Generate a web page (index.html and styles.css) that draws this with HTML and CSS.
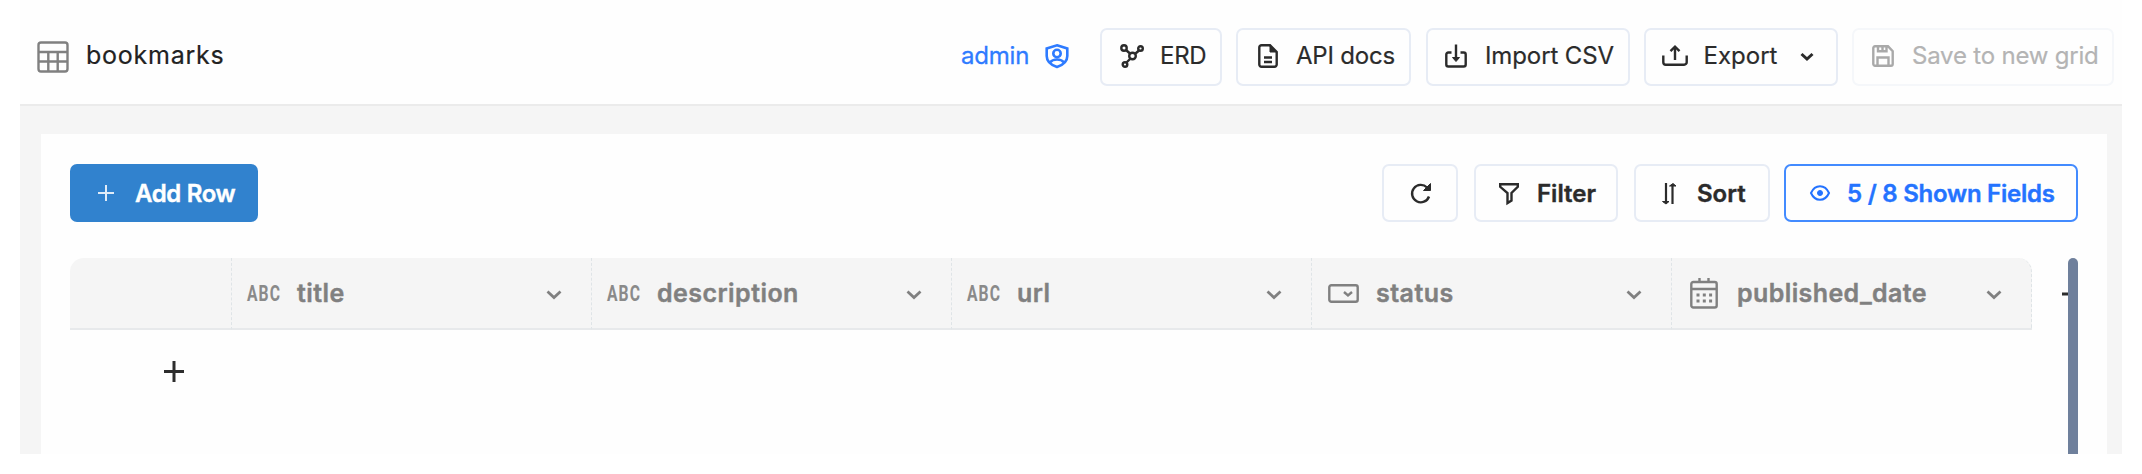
FILE: index.html
```
<!DOCTYPE html>
<html lang="en">
<head>
<meta charset="utf-8">
<title>bookmarks</title>
<link rel="stylesheet" href="styles.css">
</head>
<body>
<div class="app">
  <header class="topbar">
    <svg class="icon table-icon" width="32" height="32" viewBox="0 0 32 32"><rect x="1.5" y="1.500" width="29" height="29" rx="2.5"/><path d="M2 11h28M2 20.500h28M11.300 11v19.500M20.700 11v19.500"/></svg>
    <h1 class="page-title">bookmarks</h1>
    <span class="role">admin</span>
    <svg class="icon shield" width="24" height="24" viewBox="0 0 24 24"><path d="M12 1.300 22.300 4.500V12c0 5.500-4.300 9-10.300 11C6 21 1.700 17.500 1.700 12V4.500z"/><circle cx="12" cy="9.500" r="3.700"/><path d="M5 18.500c3-4 11-4 14 0"/></svg>
    <nav class="actions">
      <button class="btn erd"><svg class="icon" width="24" height="24" viewBox="0 0 24 24"><circle cx="4" cy="4" r="2.700"/><circle cx="20.500" cy="4.500" r="2.300"/><circle cx="5" cy="20.500" r="2.300"/><circle cx="12.500" cy="12" r="3.300"/><path d="m6 6 4 3.500M15.500 9.500l3.500-3M10 15l-3.500 3.500"/></svg><span>ERD</span></button>
      <button class="btn docs"><svg class="icon" width="20" height="24" viewBox="0 0 20 24"><path d="M3.500 1.300H12l6.700 6.700v12.500a2.200 2.200 0 0 1-2.200 2.200h-13a2.200 2.200 0 0 1-2.200-2.200v-17a2.200 2.200 0 0 1 2.200-2.200z"/><path class="solid" d="M12 1.500V8h6.500z"/><path d="M6 13.500h8M6 18h8"/></svg><span>API docs</span></button>
      <button class="btn import"><svg class="icon" width="22" height="24" viewBox="0 0 22 24"><path d="M6.500 8.500H3.300a2 2 0 0 0-2 2v10a2 2 0 0 0 2 2h15.400a2 2 0 0 0 2-2v-10a2 2 0 0 0-2-2h-3.200M11 .5v15"/><path class="solid" d="m7.500 13.500 3.500 4 3.500-4z"/></svg><span>Import CSV</span></button>
      <button class="btn export"><svg class="icon" width="26" height="20" viewBox="0 0 26 20"><path d="M1.300 9.500v6.700a2.500 2.500 0 0 0 2.500 2.500h18.400a2.500 2.500 0 0 0 2.500-2.500V9.500M13 14V2"/><path d="m8.500 5.200 4.500-4.500 4.500 4.500"/></svg><span>Export</span><svg class="icon caret" width="14" height="10" viewBox="0 0 14 10"><path d="m1.500 3 5.500 5 5.500-5"/></svg></button>
      <button class="btn save" disabled><svg class="icon" width="22" height="22" viewBox="0 0 22 22"><path d="M3 1.300h13l4.700 5V19a1.700 1.700 0 0 1-1.700 1.700H3A1.700 1.700 0 0 1 1.300 19V3A1.700 1.700 0 0 1 3 1.300zM6 1.500v4.800h8.500V1.500M5.500 20.500v-8h11v8M10.500 2v3"/></svg><span>Save to new grid</span></button>
    </nav>
  </header>
  <main class="card">
    <div class="toolbar">
      <button class="btn add"><svg class="icon" width="16" height="16" viewBox="0 0 16 16"><path d="M0 8h16M8 0v16"/></svg><span>Add Row</span></button>
      <div class="tools">
        <button class="btn refresh"><svg class="icon" width="21" height="21" viewBox="0 0 21 21"><path d="M19 13.500A8.700 8.700 0 1 1 17 4.500"/><path class="solid" d="M20.500 .5v7h-7z"/></svg></button>
        <button class="btn filter"><svg class="icon" width="20" height="21" viewBox="0 0 20 21"><path d="M1.200 1.300h17.600v2.500L12.500 10v7.500l-4 2.500V10L1.200 3.800z"/></svg><span>Filter</span></button>
        <button class="btn sort"><svg class="icon" width="14" height="21" viewBox="0 0 14 21"><path d="M4 0v18M10.500 21V3"/><path class="solid" d="M.5 18.500h6.500L4 21zM7.500 3h6.500L11 .5z"/></svg><span>Sort</span></button>
        <button class="btn fields"><svg class="icon" width="20" height="16" viewBox="0 0 20 16"><path d="M1 8c4-9 14-9 18 0-4 9-14 9-18 0z"/><circle class="solid" cx="10" cy="8" r="2.500"/></svg><span>5 / 8 Shown Fields</span></button>
      </div>
    </div>
    <div class="grid">
      <div class="columns">
        <div class="col index"></div>
        <div class="col title"><svg class="abc" width="34" height="28" viewBox="0 0 34 28"><text x="0" y="22" textLength="34" lengthAdjust="spacingAndGlyphs">ABC</text></svg><span>title</span><svg class="icon caret" width="16" height="11" viewBox="0 0 16 11"><path d="m1.500 2.500 6.500 6 6.500-6"/></svg></div>
        <div class="col description"><svg class="abc" width="34" height="28" viewBox="0 0 34 28"><text x="0" y="22" textLength="34" lengthAdjust="spacingAndGlyphs">ABC</text></svg><span>description</span><svg class="icon caret" width="16" height="11" viewBox="0 0 16 11"><path d="m1.500 2.500 6.500 6 6.500-6"/></svg></div>
        <div class="col url"><svg class="abc" width="34" height="28" viewBox="0 0 34 28"><text x="0" y="22" textLength="34" lengthAdjust="spacingAndGlyphs">ABC</text></svg><span>url</span><svg class="icon caret" width="16" height="11" viewBox="0 0 16 11"><path d="m1.500 2.500 6.500 6 6.500-6"/></svg></div>
        <div class="col status"><svg class="icon" width="31" height="19" viewBox="0 0 31 19"><rect x="1.300" y="1.300" width="28.400" height="16.400" rx="2"/><path d="m16 8 4 3.500 4-3.500"/></svg><span>status</span><svg class="icon caret" width="16" height="11" viewBox="0 0 16 11"><path d="m1.500 2.500 6.500 6 6.500-6"/></svg></div>
        <div class="col date"><svg class="icon" width="28" height="31" viewBox="0 0 28 31"><rect x="1.300" y="4" width="25.400" height="25.500" rx="2"/><path d="M1.500 11h25M9.500 0v4M18.500 0v4"/><path class="dots" d="M6.500 17h16M6.500 23h16"/></svg><span>published_date</span><svg class="icon caret" width="16" height="11" viewBox="0 0 16 11"><path d="m1.500 2.500 6.500 6 6.500-6"/></svg></div>
        <svg class="icon add-column" width="6" height="20" viewBox="0 0 6 20"><path d="M0 10h6"/></svg>
        <div class="scrollbar"></div>
      </div>
      <div class="new-row"><svg class="icon" width="20" height="21" viewBox="0 0 20 21"><path d="M0 10.500h20M10 0v21"/></svg></div>
    </div>
  </main>
</div>
</body>
</html>
```
FILE: styles.css
```
* { box-sizing: border-box; }
body { margin: 0; background: #fff; font: 400 24px/30px Inter, "Liberation Sans", sans-serif; color: #2d2d2d; }
.app { width: 2102px; height: 454px; margin-left: 20px; background: #f5f5f5; overflow: hidden; }
.icon { display: block; flex: none; fill: none; stroke: currentColor; stroke-width: 2.4; overflow: visible; }
.solid { fill: currentColor; stroke-width: 1; }
.topbar { height: 106px; padding: 9px 8px 0 17px; display: flex; align-items: center; background: #fefefe; border-bottom: 2px solid #ebebeb; }
.table-icon { color: #808080; }
.page-title { margin: -3px auto 0 17px; font-size: 25px; font-weight: 400; letter-spacing: .75px; color: #222; -webkit-text-stroke: .2px; }
.role, .shield { color: #2e7bff; }
.role { width: 67px; margin-top: -2px; white-space: nowrap; letter-spacing: -.2px; -webkit-text-stroke: .3px; }
.shield { margin: -1px 31px 0 17px; stroke-width: 2.6; }
.actions, .tools { display: flex; }
.actions { gap: 14px; }
.btn { height: 58px; display: flex; align-items: center; flex: none; padding: 0; border: 2px solid #e7ecf5; border-radius: 7px; background: #fefefe; color: #2b2b2b; font: inherit; white-space: nowrap; }
.actions .btn { padding-bottom: 2px; -webkit-text-stroke: .2px; }
.erd { width: 122px; padding-left: 18px; }
.erd span { margin-left: 16px; letter-spacing: -.3px; }
.docs { width: 175px; padding-left: 20px; }
.docs span { margin-left: 18px; letter-spacing: -.2px; }
.import { width: 204px; padding-left: 17px; margin-left: 1px; }
.import span { margin-left: 18px; letter-spacing: -.1px; }
.export { width: 194px; padding-left: 16px; }
.export span { width: 75px; margin-left: 15px; }
.export .caret { margin-left: 22px; stroke-width: 3; }
.save { width: 262px; padding-left: 18px; color: #a9a9a9; border-color: #f5f7fa; }
.actions .save { color: #a9a9a9; }
.save span { margin-left: 18px; color: #b4b4b4; letter-spacing: -.2px; }
.card { width: 2066px; height: 320px; margin: 28px 0 0 21px; padding: 30px 29px 0; background: #fefefe; }
.toolbar { height: 58px; display: flex; justify-content: space-between; font-weight: 600; }
.toolbar span { padding-top: 1px; -webkit-text-stroke: .4px; }
.tools { gap: 15px; }
.add { width: 188px; padding-left: 28px; border: 0; background: #3182ce; color: #fff; }
.add .icon { stroke-width: 2; opacity: .85; }
.add span { margin-left: 21px; letter-spacing: -.35px; }
.refresh { width: 76px; padding-left: 26px; }
.filter { width: 144px; padding-left: 23px; margin-left: 1px; }
.filter span { margin-left: 18px; }
.sort { width: 136px; padding-left: 26px; margin-left: 1px; }
.sort .icon { stroke-width: 2.2; }
.sort span { margin-left: 21px; }
.fields { width: 294px; padding-left: 24px; margin-left: -1px; border-color: #438bff; color: #2473ff; }
.fields .icon { stroke-width: 2; }
.fields span { margin-left: 17px; letter-spacing: -.25px; }
.grid { margin-top: 36px; }
.columns { display: flex; height: 196px; }
.col { width: 360px; height: 72px; flex: none; display: flex; align-items: center; padding: 0 29px 0 15px; background: #f5f5f5; color: #808080; border-bottom: 2px solid #e7e9eb; border-left: 1px dashed #dfe4e7; font-size: 25px; font-weight: 600; letter-spacing: .45px; }
.col .caret { margin: 2px 0 0 auto; stroke-width: 2.8; }
.col span { margin-left: 16px; white-space: nowrap; -webkit-text-stroke: .4px; }
.index { width: 161px; border-left: 0; border-top-left-radius: 14px; }
.abc { flex: none; overflow: visible; }
.abc text { font: 700 22px/1 Roboto, sans-serif; letter-spacing: 1.5px; fill: #8a8a8a; }
.status .icon:first-child { margin-left: 1px; }
.status span { margin-left: 17px; }
.date { width: 361px; padding-left: 18px; border-right: 1px dashed #dfe4e7; border-top-right-radius: 14px; }
.date .icon:first-child { stroke-width: 2.4; }
.date span { margin-left: 19px; letter-spacing: .4px; }
.dots { stroke-width: 3; stroke-dasharray: 3 3.300; }
.add-column { margin: 26px 0 0 30px; stroke-width: 3; }
.scrollbar { width: 10px; height: 196px; background: #6f809c; border-radius: 5px 5px 0 0; }
.new-row { margin-top: -93px; padding-left: 94px; }
.new-row .icon { stroke-width: 3; }
```
